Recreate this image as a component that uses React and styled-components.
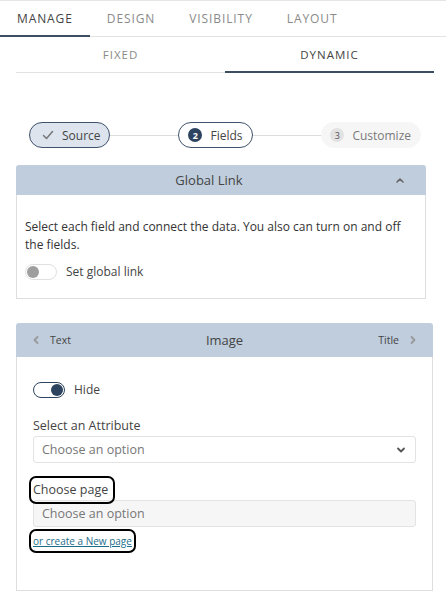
import React from "react";
import styled, { createGlobalStyle, css } from "styled-components";

const Global = createGlobalStyle`
  * { box-sizing: border-box; }
  body { margin: 0; background: #fff; font-family: "Open Sans", "Noto Sans", sans-serif; color: #444; }
`;

const Page = styled.div`
  width: 446px;
  min-height: 605px;
  border-top: 1px solid #e6e6e6;
`;

const TabBar = styled.div`
  display: flex;
  height: 36px;
  border-bottom: 1px solid #e2e2e2;
`;

const Tab = styled.div`
  padding: 0 17px;
  display: flex;
  align-items: center;
  font-size: 12px;
  letter-spacing: 0.9px;
  color: ${(p) => (p.$active ? "#444" : "#8a8a8a")};
  border-bottom: 2px solid ${(p) => (p.$active ? "#3c4d63" : "transparent")};
  margin-bottom: -1px;
`;

const SubTabs = styled.div`
  display: grid;
  grid-template-columns: 1fr 1fr;
  margin: 0 12px 0 16px;
`;

const SubTab = styled.div`
  height: 36px;
  display: flex;
  align-items: center;
  justify-content: center;
  font-size: 11.5px;
  letter-spacing: 1px;
  color: ${(p) => (p.$active ? "#444" : "#8a8a8a")};
  border-bottom: ${(p) => (p.$active ? "2px solid #3c4d63" : "1px solid #e2e2e2")};
`;

const Stepper = styled.div`
  display: flex;
  align-items: center;
  padding: 0 25px 0 29px;
  margin-top: 49px;
`;

const Line = styled.div`
  flex: 1;
  height: 1px;
  background: #dcdcdc;
`;

const Step = styled.div`
  height: 26px;
  border-radius: 13px;
  display: flex;
  align-items: center;
  gap: 8px;
  font-size: 12px;
  ${(p) =>
    p.$state === "done" &&
    css`
      background: #dde4ee;
      border: 1px solid #3f526b;
      color: #444;
      padding: 0 8px 0 12px;
    `}
  ${(p) =>
    p.$state === "current" &&
    css`
      background: #fff;
      border: 1px solid #3f526b;
      color: #444;
      padding: 0 9px 0 9px;
    `}
  ${(p) =>
    p.$state === "todo" &&
    css`
      background: #f6f6f6;
      border: 1px solid #f6f6f6;
      color: #7a7a7a;
      padding: 0 9px 0 8px;
    `}
`;

const StepNum = styled.span`
  width: 14px;
  height: 14px;
  border-radius: 50%;
  display: inline-flex;
  align-items: center;
  justify-content: center;
  font-size: 9px;
  font-weight: ${(p) => (p.$active ? 700 : 400)};
  background: ${(p) => (p.$active ? "#2d4460" : "#e2e2e2")};
  color: ${(p) => (p.$active ? "#fff" : "#555")};
`;

const Panel = styled.section`
  margin: ${(p) => p.$margin};
`;

const PanelHead = styled.div`
  height: ${(p) => p.$h}px;
  background: #bfcddd;
  border-radius: 3px 3px 0 0;
  display: flex;
  align-items: center;
  padding: 0 ${(p) => p.$padR}px 0 14px;
  font-size: 13px;
  color: #444;
`;

const HeadTitle = styled.div`
  flex: 1;
  text-align: center;
`;

const HeadSide = styled.div`
  display: flex;
  align-items: center;
  gap: 8px;
  font-size: 10.5px;
  color: #444;
  width: ${(p) => p.$w || 60}px;
  justify-content: ${(p) => (p.$right ? "flex-end" : "flex-start")};
`;

const PanelBody = styled.div`
  border: 1px solid #dedede;
  border-top: none;
  padding: ${(p) => p.$pad};
  min-height: ${(p) => p.$minH || 0}px;
`;

const Paragraph = styled.p`
  margin: 0;
  font-size: 12px;
  line-height: 18px;
  color: #333;
`;

const ToggleRow = styled.div`
  display: flex;
  align-items: center;
  gap: 9px;
  font-size: 12px;
  color: #444;
  margin-top: ${(p) => p.$mt || 0}px;
`;

const Track = styled.span`
  width: 32px;
  height: 16px;
  border-radius: 8px;
  border: 1px solid ${(p) => (p.$on ? "#2d4460" : "#e0e0e0")};
  background: #fff;
  display: flex;
  align-items: center;
  justify-content: ${(p) => (p.$on ? "flex-end" : "flex-start")};
  padding: 0 1px;
`;

const Knob = styled.span`
  width: 12px;
  height: 12px;
  border-radius: 50%;
  background: ${(p) => (p.$on ? "#2d4460" : "#9e9e9e")};
`;

const FieldLabel = styled.div`
  font-size: 12.5px;
  color: #444;
  margin-top: ${(p) => p.$mt}px;
  line-height: 18px;
  ${(p) =>
    p.$focus &&
    css`
      display: inline-block;
      outline: 2px solid #000;
      outline-offset: 2px;
      border-radius: 3px;
      line-height: 20px;
      padding-right: 3px;
    `}
`;

const Select = styled.div`
  height: 27px;
  margin-top: ${(p) => p.$mt}px;
  border: 1px solid #e3e3e3;
  border-radius: 3px;
  background: ${(p) => (p.$disabled ? "#f6f6f6" : "#fff")};
  display: flex;
  align-items: center;
  justify-content: space-between;
  padding: 0 8px 0 8px;
  font-size: 12.5px;
  color: #777;
`;

const Link = styled.a`
  display: inline-block;
  font-size: 10px;
  color: #1d6d8a;
  text-decoration: underline;
  margin-top: 6px;
  line-height: 16px;
  outline: 2px solid #000;
  outline-offset: 2px;
  border-radius: 3px;
`;

const Chevron = ({ dir, color = "#666", size = 12, sw = 1.8 }) => {
  const paths = {
    up: "M3 8 L6 5 L9 8",
    down: "M3 4.5 L6 7.5 L9 4.5",
    left: "M7.5 3 L4.5 6 L7.5 9",
    right: "M4.5 3 L7.5 6 L4.5 9",
  };
  return (
    <svg width={size} height={size} viewBox="0 0 12 12">
      <path d={paths[dir]} fill="none" stroke={color} strokeWidth={sw} strokeLinecap="round" strokeLinejoin="round" />
    </svg>
  );
};

const Check = () => (
  <svg width="12" height="12" viewBox="0 0 12 12">
    <path d="M1.5 6.5 L4.5 9.5 L10.5 2.5" fill="none" stroke="#777" strokeWidth="1.5" strokeLinecap="round" strokeLinejoin="round" />
  </svg>
);

export default function App() {
  return (
    <>
      <Global />
      <Page>
        <TabBar>
          <Tab $active>MANAGE</Tab>
          <Tab>DESIGN</Tab>
          <Tab>VISIBILITY</Tab>
          <Tab>LAYOUT</Tab>
        </TabBar>
        <SubTabs>
          <SubTab>FIXED</SubTab>
          <SubTab $active>DYNAMIC</SubTab>
        </SubTabs>

        <Stepper>
          <Step $state="done">
            <Check />
            Source
          </Step>
          <Line />
          <Step $state="current">
            <StepNum $active>2</StepNum>
            Fields
          </Step>
          <Line />
          <Step $state="todo">
            <StepNum>3</StepNum>
            Customize
          </Step>
        </Stepper>

        <Panel $margin="17px 20px 0 16px">
          <PanelHead $h={30} $padR={20}>
            <HeadSide $w={42} />
            <HeadTitle>Global Link</HeadTitle>
            <HeadSide $right>
              <Chevron dir="up" color="#666" sw={1.6} />
            </HeadSide>
          </PanelHead>
          <PanelBody $pad="23px 8px 18px 8px">
            <Paragraph>
              Select each field and connect the data. You also can turn on and off the fields.
            </Paragraph>
            <ToggleRow $mt={9}>
              <Track>
                <Knob />
              </Track>
              Set global link
            </ToggleRow>
          </PanelBody>
        </Panel>

        <Panel $margin="24px 13px 0 16px">
          <PanelHead $h={34} $padR={14}>
            <HeadSide>
              <Chevron dir="left" color="#999" />
              Text
            </HeadSide>
            <HeadTitle>Image</HeadTitle>
            <HeadSide $right>
              Title
              <Chevron dir="right" color="#999" />
            </HeadSide>
          </PanelHead>
          <PanelBody $pad="24px 16px 0 16px" $minH={234}>
            <ToggleRow>
              <Track $on>
                <Knob $on />
              </Track>
              Hide
            </ToggleRow>
            <FieldLabel $mt={19}>Select an Attribute</FieldLabel>
            <Select $mt={1}>
              Choose an option
              <Chevron dir="down" color="#555" />
            </Select>
            <div>
              <FieldLabel $focus $mt={17}>Choose page</FieldLabel>
            </div>
            <Select $mt={0} $disabled>
              Choose an option
            </Select>
            <Link href="#">or create a New page</Link>
          </PanelBody>
        </Panel>
      </Page>
    </>
  );
}
